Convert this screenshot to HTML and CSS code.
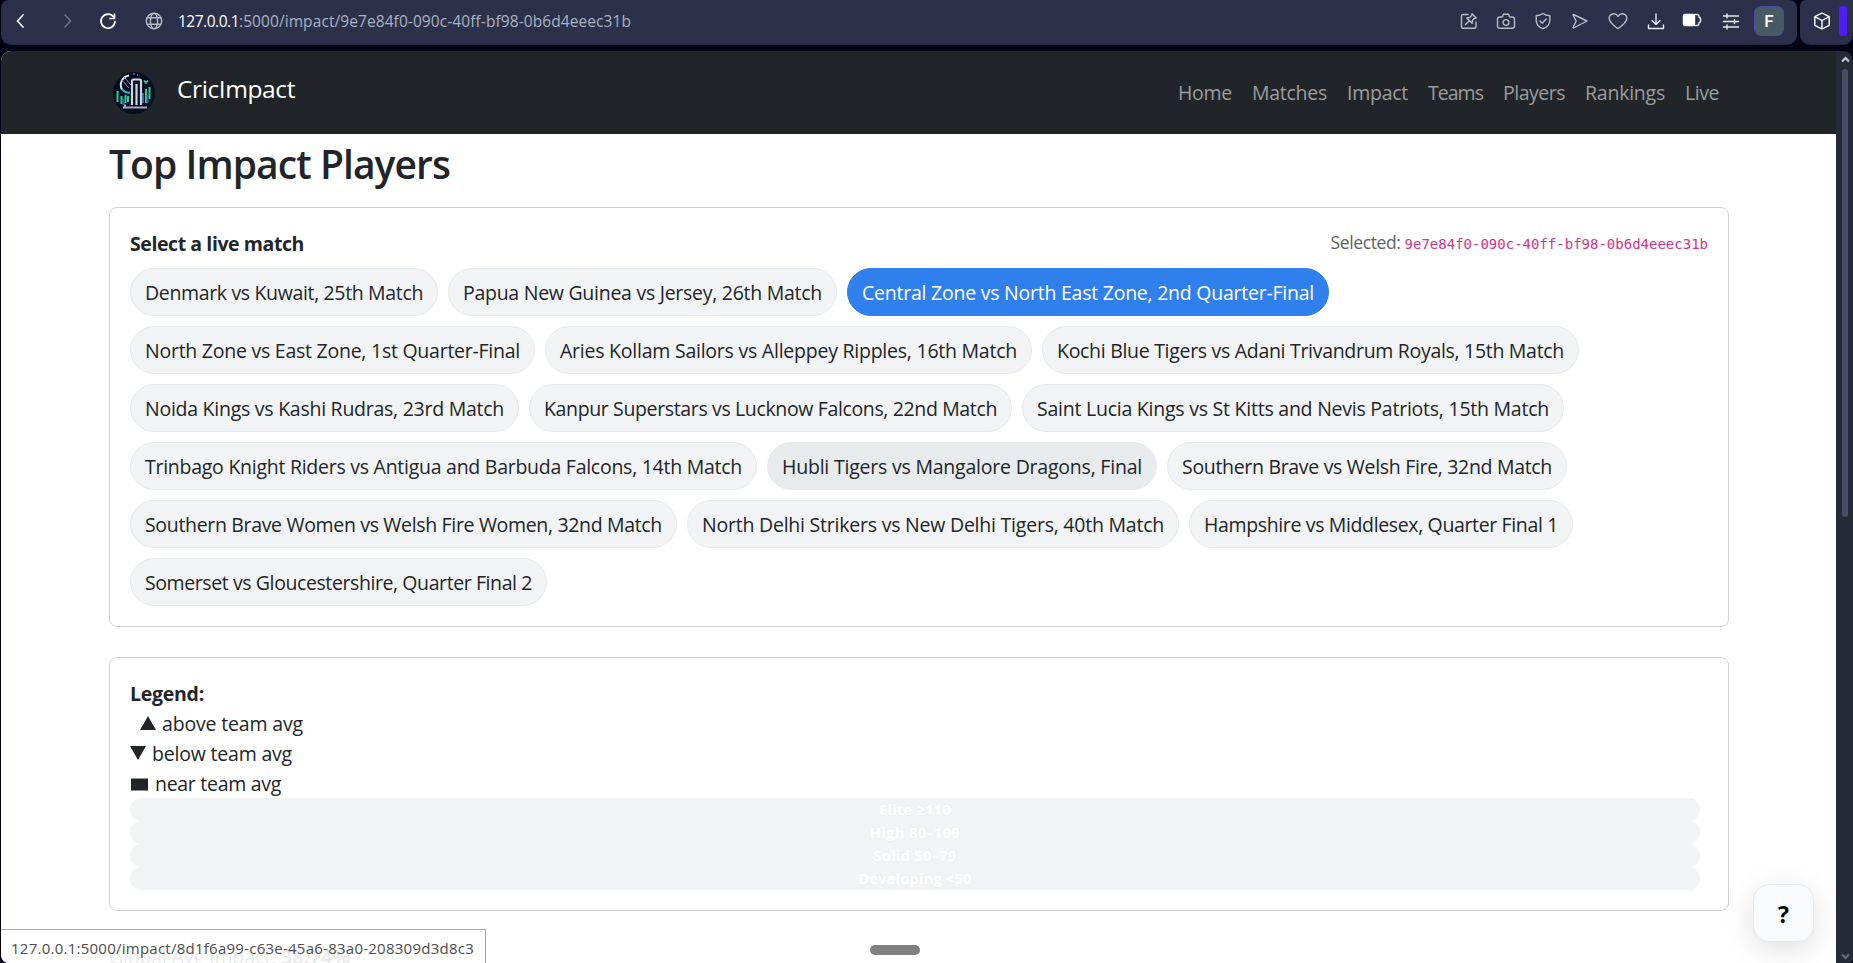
FILE: index.html
```
<!DOCTYPE html>
<html lang="en">
<head>
<meta charset="utf-8">
<title>CricImpact</title>
<link rel="stylesheet" href="styles.css">
</head>
<body>
<header class="chrome">
  <div class="toolbar">
    <div class="toolbar-nav">
      <svg class="ico back" width="16" height="16" viewBox="0 0 16 16"><path d="M10 2 4.500 8 10 14"/></svg>
      <svg class="ico forward" width="16" height="16" viewBox="0 0 16 16"><path d="M6 2 11.500 8 6 14"/></svg>
      <svg class="ico reload" width="18" height="18" viewBox="0 0 18 18"><path d="M14.600 5A7 7 0 1 0 16 9.500M15.500 2v4.500H11"/></svg>
      <svg class="ico globe" width="18" height="18" viewBox="0 0 18 18"><circle cx="9" cy="9" r="7.700"/><ellipse cx="9" cy="9" rx="3.600" ry="7.700"/><path d="M2.200 5.800h13.600M2.200 12.200h13.600"/></svg>
      <div class="url"><span class="host" data-w="61">127.0.0.1</span><span data-w="392">:5000/impact/9e7e84f0-090c-40ff-bf98-0b6d4eeec31b</span></div>
    </div>
    <div class="toolbar-actions">
      <svg class="ico" width="20" height="20" viewBox="0 0 20 20"><path d="M9 3.500H4Q2.500 3.500 2.500 5v10.800q0 1.500 1.500 1.500h11.500q1.500 0 1.500-1.500V11M6.500 13.500l4-4M13 2.800l4.200 4.200-2 .5-1.700 1.700-.4 3.100-5.400-5.400 3.100-.4 1.700-1.700z"/></svg>
      <svg class="ico" width="20" height="20" viewBox="0 0 20 20"><path d="M6.300 6 7.500 3.300h5L13.700 6h2.300q2.500 0 2.500 2v7.300q0 2-2.500 2H4q-2.500 0-2.500-2V8q0-2 2.500-2z"/><circle cx="10" cy="11.500" r="2.900"/></svg>
      <svg class="ico" width="20" height="20" viewBox="0 0 20 20"><path d="M10 2.500q3 2.200 6.800 2.300v4.700q0 5.500-6.800 8.200-6.800-2.700-6.800-8.200V4.800Q7 4.700 10 2.500zM7 10l2.200 2.300 4-4.300"/></svg>
      <svg class="ico" width="20" height="20" viewBox="0 0 20 20"><path d="M3.500 3.500 17 10 3.500 17l-.5-.5L6.200 10 3 4z"/></svg>
      <svg class="ico" width="22" height="20" viewBox="0 0 22 20"><path d="M11 17.800C5 13.500 2.200 10.700 2.200 7.300c0-4.600 6-6.300 8.800-2 2.800-4.300 8.800-2.600 8.800 2 0 3.400-2.800 6.200-8.800 10.500z"/></svg>
      <svg class="ico bright" width="20" height="20" viewBox="0 0 20 20"><path d="M10 3v10M6 9.500l4 4 4-4M2.500 14v3.500h15V14"/></svg>
      <svg class="ico bright battery" width="20" height="20" viewBox="0 0 20 20"><rect class="solid" x="1.500" y="3.500" width="11" height="11" rx="1.500"/><path d="M12.500 3.500H15q2 0 2 2v.7q1.700.3 1.700 2.800T17 11.800v.7q0 2-2 2h-2.500"/></svg>
      <svg class="ico bright" width="20" height="20" viewBox="0 0 20 20"><path d="M2.500 5h15M2.500 10.500h15M2.500 16h15M6 3v4M13.500 8.500v4M6 14v4"/></svg>
      <div class="avatar">F</div>
    </div>
  </div>
  <div class="side-tools">
    <svg class="ico white" width="20" height="20" viewBox="0 0 20 20"><path d="M10 2l7.200 3.700v8.600L10 18l-7.200-3.700V5.700zM2.800 5.700 10 9.500l7.200-3.800M10 9.500V18"/></svg>
    <span class="accent"></span>
  </div>
</header>

<div class="viewport">
  <div class="page">
    <nav class="navbar">
      <div class="brand">
        <svg class="logo" width="42" height="42" viewBox="0 0 42 42">
          <circle class="logo-bg" cx="21" cy="21" r="21"/>
          <path class="ball" d="M16 3.500a9.500 9.500 0 0 0-7 14"/>
          <path class="ball-teal" d="M9 17.500q4 4 8 3"/>
          <path class="seam" d="M8 7l8 9M11 5l7 8"/>
          <path class="bars" d="M4.500 19v11M8.500 24v8M12.500 23v8M33 17v14M36.500 15v12M15 24v6"/>
          <path class="bars-blue" d="M30 21v10M10.500 27v6M34.500 23v8M20 2h2M24 3h1"/>
          <path class="stumps" d="M19 33V9q0-1.500 1.500-1.500h6Q28 7.500 28 9v24M23.500 12v21"/>
          <path class="pin" d="M31 8.500q2 3 4 0M33 10v2"/>
          <path class="base" d="M10 35.500h24M12 32.500v3"/>
        </svg>
        <span class="brand-name" data-w="118">CricImpact</span>
      </div>
      <div class="links">
        <a data-w="54">Home</a><a data-w="75">Matches</a><a data-w="61">Impact</a><a data-w="55">Teams</a><a data-w="62">Players</a><a data-w="80">Rankings</a><a data-w="34">Live</a>
      </div>
    </nav>
    <main class="container">
      <h1 class="title"><span data-w="341">Top Impact Players</span></h1>
      <section class="card">
        <div class="card-head">
          <strong class="card-title" data-w="174">Select a live match</strong>
          <div class="selected"><span data-w="70">Selected:</span><code>9e7e84f0-090c-40ff-bf98-0b6d4eeec31b</code></div>
        </div>
        <div class="pills">
          <a class="pill"><span data-w="278">Denmark vs Kuwait, 25th Match</span></a>
          <a class="pill"><span data-w="359">Papua New Guinea vs Jersey, 26th Match</span></a>
          <a class="pill active"><span data-w="452">Central Zone vs North East Zone, 2nd Quarter-Final</span></a>
          <a class="pill"><span data-w="375">North Zone vs East Zone, 1st Quarter-Final</span></a>
          <a class="pill"><span data-w="457">Aries Kollam Sailors vs Alleppey Ripples, 16th Match</span></a>
          <a class="pill"><span data-w="507">Kochi Blue Tigers vs Adani Trivandrum Royals, 15th Match</span></a>
          <a class="pill"><span data-w="359">Noida Kings vs Kashi Rudras, 23rd Match</span></a>
          <a class="pill"><span data-w="453">Kanpur Superstars vs Lucknow Falcons, 22nd Match</span></a>
          <a class="pill"><span data-w="512">Saint Lucia Kings vs St Kitts and Nevis Patriots, 15th Match</span></a>
          <a class="pill"><span data-w="597">Trinbago Knight Riders vs Antigua and Barbuda Falcons, 14th Match</span></a>
          <a class="pill hover"><span data-w="360">Hubli Tigers vs Mangalore Dragons, Final</span></a>
          <a class="pill"><span data-w="370">Southern Brave vs Welsh Fire, 32nd Match</span></a>
          <a class="pill"><span data-w="517">Southern Brave Women vs Welsh Fire Women, 32nd Match</span></a>
          <a class="pill"><span data-w="462">North Delhi Strikers vs New Delhi Tigers, 40th Match</span></a>
          <a class="pill"><span data-w="354">Hampshire vs Middlesex, Quarter Final 1</span></a>
          <a class="pill"><span data-w="387">Somerset vs Gloucestershire, Quarter Final 2</span></a>
        </div>
      </section>
      <section class="card">
        <div class="legend-line"><strong data-w="74">Legend:</strong></div>
        <div class="legend-line indent"><svg class="mark" width="16" height="14" viewBox="0 0 16 14"><path d="M8 0l8 14H0z"/></svg><span data-w="141">above team avg</span></div>
        <div class="legend-line"><svg class="mark" width="16" height="14" viewBox="0 0 16 14"><path d="M0 0h16L8 14z"/></svg><span data-w="140">below team avg</span></div>
        <div class="legend-line"><svg class="mark wide" width="18" height="14" viewBox="0 0 18 14"><path d="M1 1.500h17v12H1z"/></svg><span data-w="126">near team avg</span></div>
        <div class="tiers">
          <div class="tier"><span data-w="72">Elite ≥110</span></div>
          <div class="tier"><span data-w="90">High 80–109</span></div>
          <div class="tier"><span data-w="83">Solid 50–79</span></div>
          <div class="tier"><span data-w="113">Developing &lt;50</span></div>
        </div>
      </section>
      <p class="global"><span data-w="167">Global Avg Impact:</span><strong data-w="69">38.74%</strong></p>
    </main>
    <div class="status"><span data-w="463">127.0.0.1:5000/impact/8d1f6a99-c63e-45a6-83a0-208309d3d8c3</span></div>
    <div class="grip"></div>
    <div class="help">?</div>
  </div>
  <aside class="scrollbar">
    <svg class="arrow" width="9" height="7" viewBox="0 0 9 7"><path d="M1 5.500 4.500 2 8 5.500"/></svg>
    <span class="thumb"></span>
    <svg class="arrow down" width="9" height="7" viewBox="0 0 9 7"><path d="M1 1.500 4.500 5 8 1.500"/></svg>
  </aside>
</div>
<script src="fit.js"></script>
</body>
</html>
```
FILE: fit.js
```
// Tracks each label so that it fills the width given in data-w.
document.querySelectorAll('[data-w]').forEach(function (el) {
  var target = Number(el.dataset.w);
  var natural = el.getBoundingClientRect().width;
  el.style.letterSpacing = (target - natural) / el.textContent.length + 'px';
  el.style.width = target + 'px';
});
```
FILE: styles.css
```
* { box-sizing: border-box; }

body {
  margin: 0;
  width: 1853px;
  height: 963px;
  overflow: hidden;
  background: #020416;
  color: #212529;
  font: 19.500px/30px "Open Sans", "Noto Sans", sans-serif;
  display: flex;
  flex-direction: column;
  gap: 6px;
}

[data-w] { display: inline-block; white-space: nowrap; }

.chrome { display: flex; gap: 3px; height: 45px; flex: none; padding-left: 1px; }
.toolbar, .side-tools {
  background: #2b314b;
  display: flex;
  align-items: center;
  height: 45px;
  border-bottom: 1px solid #20263c;
}
.toolbar { width: 1796px; border-radius: 8px 8px 10px 10px; justify-content: space-between; padding: 0 13px 3px 12px; }
.side-tools { flex: 1; border-radius: 6px 0 10px 10px; padding: 0 6px 3px 12px; justify-content: space-between; }
.toolbar-nav, .toolbar-actions { display: flex; align-items: center; }
.toolbar-actions { gap: 17.200px; }

.ico { fill: none; stroke: #b9bcc4; stroke-width: 1.400; stroke-linecap: round; stroke-linejoin: round; display: block; flex: none; }
.ico.bright { stroke: #e8e9ee; }
.ico.white { stroke: #fff; }
.ico .solid { fill: #fff; stroke: #fff; }
.battery { margin-right: 2px; margin-left: -2px; }
.back { stroke: #fff; stroke-width: 1.700; }
.forward { stroke: #70768a; margin-left: 30px; }
.reload { stroke: #fff; stroke-width: 1.700; margin-left: 24px; }
.globe { margin-left: 28px; }
.url { margin-left: 15px; font-size: 15.500px; color: #a9b1c2; white-space: nowrap; display: flex; }
.host { color: #fff; }
.avatar {
  width: 30px;
  height: 30px;
  border: 1px solid #4b49a6;
  border-radius: 7px;
  background: #475a66;
  color: #fff;
  font: 500 17px/29px Roboto, "Open Sans", sans-serif;
  text-align: center;
  margin-left: -4px;
}
.accent { width: 8px; height: 30px; border-radius: 3px; background: #4b1dff; }

.viewport { display: flex; flex: 1; min-height: 0; padding-left: 1px; }
.page {
  position: relative;
  width: 1835px;
  background: #fff;
  border-radius: 10px 0 0 8px;
  overflow: hidden;
}
.navbar {
  height: 83px;
  background: #212529;
  display: flex;
  justify-content: space-between;
  align-items: center;
  padding: 0 117px 0 112px;
}
.brand { display: flex; align-items: center; gap: 22px; }
.brand-name { color: #fff; font-size: 24.500px; line-height: 38px; margin-bottom: 8px; }
.links { display: flex; gap: 20px; color: #9b9d9f; }

.logo { fill: none; stroke-width: 2; }
.logo-bg { fill: #050d20; }
.ball { stroke: #dfe3ee; }
.ball-teal { stroke: #2bb9c4; }
.seam { stroke: #8790ac; stroke-width: 1; }
.bars { stroke: #22cf98; }
.bars-blue { stroke: #1c718a; }
.stumps { stroke: #cfd3e0; stroke-width: 2.200; }
.pin { stroke: #35dca8; stroke-width: 1.500; }
.base { stroke: #9fa9bd; }

.container { width: 1620px; margin-left: 108px; padding-top: 6px; }
.title { margin: 0 0 19px; font-size: 39px; line-height: 48px; font-weight: 600; }
.card { border: 1px solid #d0d1d2; border-radius: 8px; padding: 20px; margin-bottom: 30px; }
.card-head { display: flex; justify-content: space-between; margin-bottom: 10px; height: 30px; }
.card-title { line-height: 32px; }
.selected { display: flex; gap: 4px; font-size: 17.500px; line-height: 29px; color: #5c6166; }
.selected code { font: 14px/32px "DejaVu Sans Mono", monospace; color: #d63384; }

.pills { display: flex; flex-wrap: wrap; gap: 10px; }
.pill {
  height: 48px;
  padding: 9px 14px 7px;
  border: 1px solid #e7eaed;
  border-radius: 24px;
  background: #f1f3f5;
}
.pill.hover { background: #e7ebee; border-color: #e7ebee; }
.pill.active { background: #2f80ed; border-color: #2f80ed; color: #fff; }

.legend-line { display: flex; align-items: center; gap: 6px; height: 30px; padding-top: 2px; }
.indent { padding-left: 10px; }
.mark { fill: #212529; margin-bottom: 2px; }
.mark.wide { margin-bottom: 0; margin-right: 1px; }
.tiers { margin-right: 8px; }
.tier {
  height: 23px;
  border-radius: 12px;
  background: #f1f3f5;
  color: #fff;
  font-size: 14.500px;
  line-height: 23px;
  font-weight: 700;
  text-align: center;
}
.global { margin: 0; padding-top: 1px; display: flex; gap: 5px; color: #5c6166; }

.status {
  position: absolute;
  left: 0;
  bottom: 0;
  width: 485px;
  height: 34px;
  padding: 3px 0 0 10px;
  border: 1px solid #a9a9a9;
  border-width: 1px 1px 0 0;
  background: rgba(255, 255, 255, .87);
  color: #4c4c4c;
  font-size: 15px;
}
.grip { position: absolute; left: 869px; bottom: 8px; width: 50px; height: 10px; border-radius: 5px; background: #808080; }
.help {
  position: absolute;
  left: 1752px;
  bottom: 21px;
  width: 61px;
  height: 58px;
  border: 1px solid #e5e9ee;
  border-radius: 16px;
  background: #f8fafc;
  box-shadow: 0 8px 30px rgba(0, 0, 0, .13);
  color: #000;
  font-weight: 700;
  font-size: 23px;
  line-height: 58px;
  text-align: center;
}

.scrollbar {
  width: 17px;
  background: #262936;
  border-radius: 0 10px 4px 0;
  display: flex;
  flex-direction: column;
  align-items: center;
  padding: 5px 0 3px 1px;
}
.thumb { width: 6px; height: 448px; border-radius: 3px; background: #4b4d66; margin-top: 6px; }
.arrow { fill: none; stroke: #c9c9cd; stroke-width: 2.200; flex: none; }
.down { stroke: #6c6c72; margin-top: auto; }
```
